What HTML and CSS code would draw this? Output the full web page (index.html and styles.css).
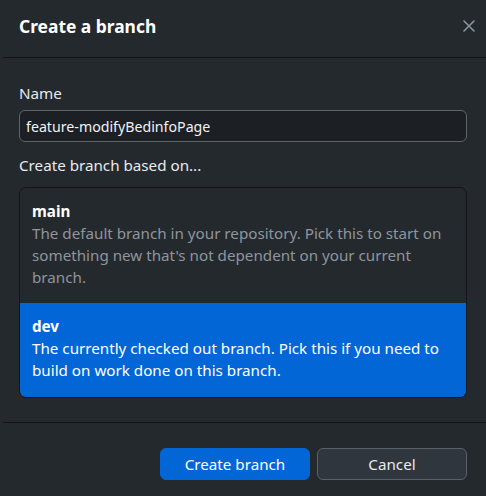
FILE: index.html
```html
<!DOCTYPE html>
<html>
<head>
<meta charset="utf-8">
<link rel="stylesheet" href="styles.css">
</head>
<body>
<div class="dialog">
  <header class="header">
    <h1 class="title">Create a branch</h1>
    <span class="close" aria-label="Close">
      <svg width="12" height="12" viewBox="0 0 12 12"><path d="M1 1 L11 11 M11 1 L1 11" stroke="#8b949e" stroke-width="1.6" stroke-linecap="round"/></svg>
    </span>
  </header>
  <main class="content">
    <label class="label">Name</label>
    <div class="input">feature-modifyBedinfoPage</div>
    <div class="label based">Create branch based on...</div>
    <div class="list">
      <div class="item">
        <div class="item-name">main</div>
        <div class="item-desc">The default branch in your repository. Pick this to start on something new that's not dependent on your current branch.</div>
      </div>
      <div class="item selected">
        <div class="item-name">dev</div>
        <div class="item-desc">The currently checked out branch. Pick this if you need to build on work done on this branch.</div>
      </div>
    </div>
  </main>
  <footer class="footer">
    <button class="btn primary">Create branch</button>
    <button class="btn secondary">Cancel</button>
  </footer>
</div>
</body>
</html>
```

FILE: styles.css
```css
html, body {
  margin: 0;
  padding: 0;
  background: #24292e;
}
body {
  font-family: "Noto Sans", "Open Sans", sans-serif;
  font-size: 15.2px;
  color: #e1e4e8;
}
.dialog {
  width: 486px;
  height: 496px;
  display: flex;
  flex-direction: column;
}
.header {
  height: 58px;
  box-sizing: border-box;
  display: flex;
  align-items: center;
  justify-content: space-between;
  margin-left: 3px;
  padding: 0 11px 5px 16px;
  border-bottom: 1px solid #141414;
}
.title {
  margin: 0;
  font-size: 17.4px;
  font-weight: 700;
  color: #ffffff;
}
.close {
  display: flex;
  width: 12px;
  height: 12px;
}
.content {
  padding: 25px 19px 24px 19px;
  display: flex;
  flex-direction: column;
}
.label {
  display: block;
  line-height: 20px;
  color: #e8eaed;
}
.input {
  margin-top: 7px;
  height: 32px;
  box-sizing: border-box;
  border: 1px solid #5d646c;
  border-radius: 6px;
  background: #1c2025;
  padding: 0 6px;
  display: flex;
  align-items: center;
  font-size: 14.2px;
  color: #f0f2f4;
}
.based {
  margin-top: 13px;
}
.list {
  margin-top: 12px;
  border: 1px solid #141518;
  border-radius: 7px;
  overflow: hidden;
}
.item {
  padding: 12px 12px 15px 12px;
}
.item-name {
  font-weight: 700;
  color: #ffffff;
  line-height: 22px;
}
.item-desc {
  line-height: 22px;
  color: #8e959d;
}
.item.selected {
  background: #0366d6;
  padding-bottom: 16px;
}
.item.selected .item-desc {
  color: #ffffff;
}
.footer {
  margin-left: 3px;
  border-top: 1px solid #141414;
  flex: 1;
  display: flex;
  justify-content: flex-end;
  align-items: flex-start;
  gap: 7px;
  padding: 25px 19px 0 0;
}
.btn {
  width: 150px;
  height: 32px;
  border-radius: 6px;
  font-family: inherit;
  font-size: 15.2px;
  color: #ffffff;
  cursor: pointer;
}
.primary {
  background: #0366d6;
  border: 1px solid #0366d6;
}
.secondary {
  background: #2f363d;
  border: 1px solid #5a6068;
  color: #e8eaed;
}
```
